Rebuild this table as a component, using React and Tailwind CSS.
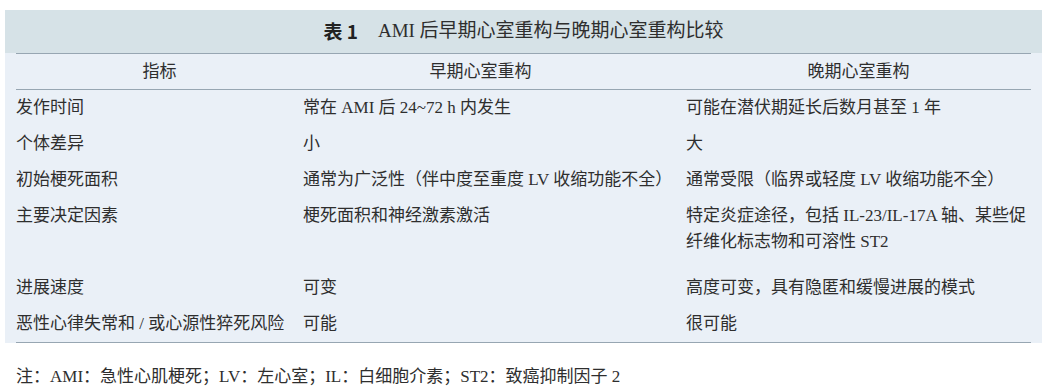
import React from "react";

const rows = [
  { k: "发作时间", a: "常在 AMI 后 24~72 h 内发生", b: ["可能在潜伏期延长后数月甚至 1 年"] },
  { k: "个体差异", a: "小", b: ["大"] },
  { k: "初始梗死面积", a: "通常为广泛性（伴中度至重度 LV 收缩功能不全）", b: ["通常受限（临界或轻度 LV 收缩功能不全）"] },
  {
    k: "主要决定因素",
    a: "梗死面积和神经激素激活",
    b: ["特定炎症途径，包括 IL-23/IL-17A 轴、某些促", "纤维化标志物和可溶性 ST2"],
    tall: true,
  },
  { k: "进展速度", a: "可变", b: ["高度可变，具有隐匿和缓慢进展的模式"] },
  { k: "恶性心律失常和 / 或心源性猝死风险", a: "可能", b: ["很可能"] },
];

const serif = "font-['Liberation_Serif','Noto_Sans_CJK_SC',serif]";

export default function App() {
  return (
    <div className={`w-[1052px] h-[391px] bg-white text-[#2e2e2e] ${serif}`}>
      <div className="ml-[5px] pt-[10px] w-[1037px]">
        <div className="bg-[#d6e2e7] h-[43px] flex items-center justify-center text-[19px]">
          <span className="font-bold font-['Noto_Sans_CJK_SC',sans-serif] text-[#222]">表 1</span>
          <span className="ml-[20px]">AMI 后早期心室重构与晚期心室重构比较</span>
        </div>
        <div className="bg-[#eaf0f7] px-[11px]">
          <div className="grid grid-cols-[287px_383px_1fr] border-t border-b border-[#97a6b2] h-[37px] items-center text-[17px]">
            <div className="text-center">指标</div>
            <div className="text-center pr-[28px]">早期心室重构</div>
            <div className="text-center">晚期心室重构</div>
          </div>
          <div className="border-b border-[#97a6b2] text-[17px] leading-[26px]">
            {rows.map((r) => (
              <div
                key={r.k}
                className={`grid grid-cols-[287px_383px_1fr] pt-[5px] ${r.tall ? "pb-[15px]" : "pb-[5px]"}`}
              >
                <div className="whitespace-nowrap">{r.k}</div>
                <div className="whitespace-nowrap">{r.a}</div>
                <div>
                  {r.b.map((t) => (
                    <div key={t} className="whitespace-nowrap">{t}</div>
                  ))}
                </div>
              </div>
            ))}
          </div>
        </div>
        <div className="pl-[11px] mt-[21px] text-[17px] leading-[26px]">
          注：AMI：急性心肌梗死；LV：左心室；IL：白细胞介素；ST2：致癌抑制因子 2
        </div>
      </div>
    </div>
  );
}
